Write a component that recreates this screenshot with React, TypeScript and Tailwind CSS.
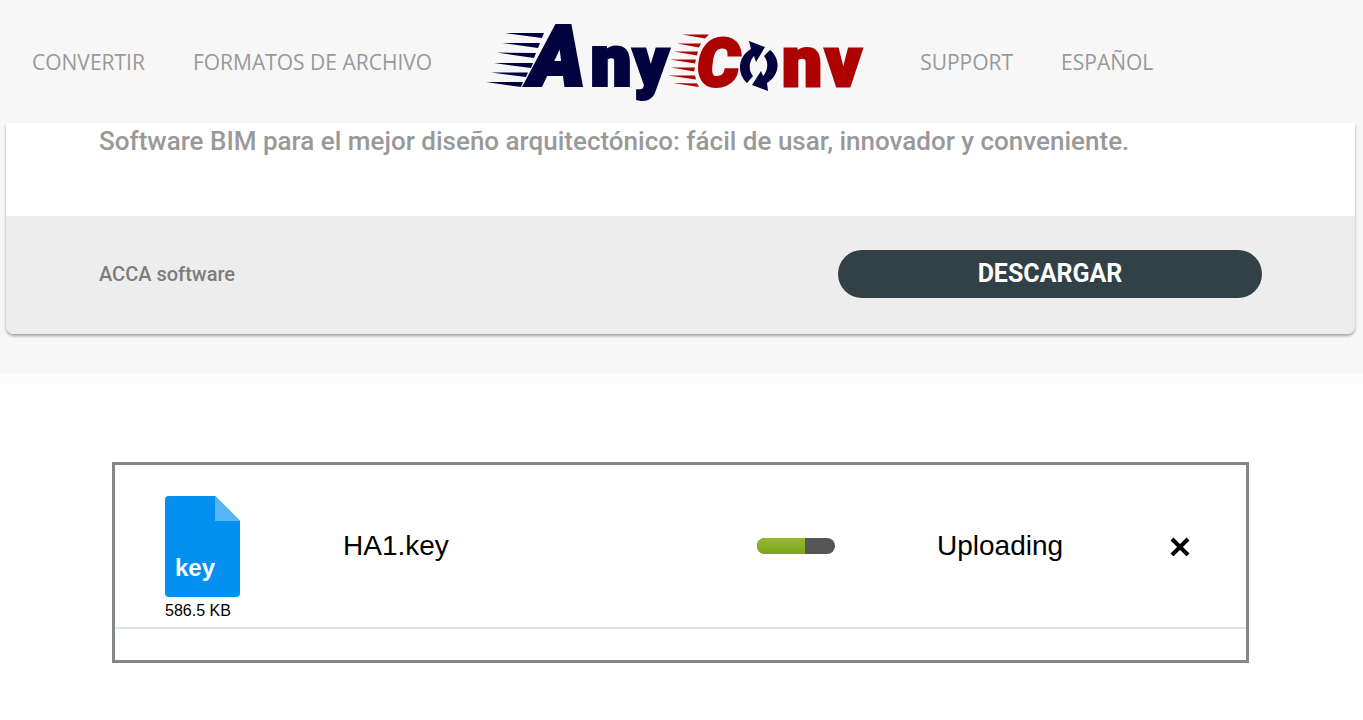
import { useState } from "react";

const leftLinks = ["CONVERTIR", "FORMATOS DE ARCHIVO"];
const rightLinks = ["SUPPORT", "ESPAÑOL"];

const Logo = () => (
  <svg width="380" height="123" viewBox="485 0 380 123" role="img" aria-label="AnyConv">
    {/* speed lines */}
    <g fill="#02023f">
      <path d="M504 33 L543 33 L541 38 Z" />
      <path d="M501 43 L539 43 L537 48 Z" />
      <path d="M496 52.5 L535 53 L533 58 Z" />
      <path d="M493 63 L532 63 L530 68 Z" />
      <path d="M490 72.5 L527 72.5 L525 77 Z" />
      <path d="M485 82 L522 82 L520 87 Z" />
    </g>
    <g fill="#ad0202">
      <path d="M681 34.5 L708 34.5 L704 38.5 Z" />
      <path d="M676 43.5 L700 43.5 L698 47.5 Z" />
      <path d="M673 51.5 L697 51.5 L696 55.5 Z" />
      <path d="M669 59.5 L695 59.5 L694 63.5 Z" />
      <path d="M670 67.5 L694 67.5 L693 71.5 Z" />
      <path d="M667 75.5 L694 75.5 L695 79.5 Z" />
      <path d="M672 83 L696 83.5 L698 87 Z" />
    </g>
    <g fontFamily="Roboto, 'Open Sans', sans-serif" fontWeight="900">
      <g fill="#02023f" stroke="#02023f" strokeWidth="3">
        <text x="529" y="85" fontSize="83" fontStyle="italic" strokeWidth="4">A</text>
        <text x="590" y="85" fontSize="71" strokeWidth="4">n</text>
        <text x="632" y="85" fontSize="69">y</text>
      </g>
      <g fill="#ad0202" stroke="#ad0202" strokeWidth="3">
        <text x="696" y="86" fontSize="67" fontStyle="italic">C</text>
        <text x="781" y="86" fontSize="71">n</text>
        <text x="824" y="86" fontSize="71">v</text>
      </g>
    </g>
    {/* circular arrows standing in for the "o" */}
    <g fill="#02023f">
      <path d="M748 41 L764 47 L755 62 L753 56 C748 61 747 71 752 76 L746 83 C736 74 736 57 750 49 Z" />
      <path d="M767 91 L751 85 L760 71 L762 76 C767 71 768 62 763 56 L769 50 C780 59 779 75 766 83 Z" />
    </g>
  </svg>
);

const NavLink = ({ label }: { label: string }) => (
  <a href="#" className="text-[21px] leading-8 text-[#999] hover:text-gray-700">
    {label}
  </a>
);

const Header = () => (
  <header className="flex h-[123px] items-center bg-[#f7f7f7] px-8 font-['Open_Sans',sans-serif]">
    <nav className="flex items-center gap-12">
      {leftLinks.map((label) => (
        <NavLink key={label} label={label} />
      ))}
    </nav>
    <a href="#" className="mx-[54px] shrink-0">
      <Logo />
    </a>
    <nav className="flex items-center gap-12">
      {rightLinks.map((label) => (
        <NavLink key={label} label={label} />
      ))}
    </nav>
  </header>
);

const AdCard = () => (
  <section className="bg-[#f7f7f7] pr-2 pb-[39px] pl-1.5 font-[Roboto,sans-serif]">
    <div className="overflow-hidden rounded-b-lg bg-white shadow-[0_2px_3px_rgba(0,0,0,0.35)]">
      <p className="px-[93px] pt-0.5 pb-[59px] text-[26px] leading-8 font-medium text-[#999]">
        Software BIM para el mejor diseño arquitectónico: fácil de usar, innovador y conveniente.
      </p>
      <div className="flex items-center justify-between bg-[#ededed] px-[93px] pt-[34px] pb-9">
        <span className="text-xl font-medium text-[#7c7c7c]">ACCA software</span>
        <button
          type="button"
          className="h-12 w-[424px] rounded-full bg-[#324047] text-[25px] leading-8 font-bold text-white"
        >
          DESCARGAR
        </button>
      </div>
    </div>
  </section>
);

const FileIcon = () => (
  <svg width="75" height="101" viewBox="0 0 75 101" role="img" aria-label="key file">
    <path d="M4 0 H50 L75 25 V97 Q75 101 71 101 H4 Q0 101 0 97 V4 Q0 0 4 0 Z" fill="#0390f1" />
    <path d="M50 0 L75 25 H50 Z" fill="#57b5f7" />
    <text x="10" y="80" fill="#fff" fontSize="24" fontWeight="700" fontFamily="'Liberation Sans', sans-serif">
      key
    </text>
  </svg>
);

const App = () => {
  const [files, setFiles] = useState([
    { name: "HA1.key", size: "586.5 KB", progress: 62, status: "Uploading" },
  ]);

  const removeFile = (name: string) => {
    setFiles(files.filter((file) => file.name !== name));
  };

  return (
    <div className="min-h-screen bg-white">
      <Header />
      <AdCard />
      <div className="h-[11px] bg-[#fcfcfc]" />

      <main className="pt-[78px] pr-[114px] pb-14 pl-28 font-['Liberation_Sans',Arial,sans-serif] text-black">
        <div className="border-3 border-[#868686] pb-[31px]">
          <table className="w-full table-fixed text-left text-[28px] leading-8">
            <tbody>
              {files.map((file) => (
                <tr key={file.name} className="border-b-2 border-[#dde5ec]">
                  <td className="w-[228px] pt-[31px] pb-1.5 pl-[50px]">
                    <FileIcon />
                    <div className="mt-1 text-base leading-5">{file.size}</div>
                  </td>
                  <td>{file.name}</td>
                  <td className="w-[180px]">
                    <div
                      role="progressbar"
                      aria-label="Upload progress"
                      aria-valuenow={file.progress}
                      className="h-4 w-[78px] overflow-hidden rounded-full bg-[#555]"
                    >
                      <div
                        className="h-full bg-linear-to-b from-[#94bb2f] to-[#7da41b]"
                        style={{ width: `${file.progress}%` }}
                      />
                    </div>
                  </td>
                  <td className="w-[233px]">{file.status}</td>
                  <td className="w-[76px]">
                    <button
                      type="button"
                      aria-label="Remove file"
                      className="block cursor-pointer"
                      onClick={() => removeFile(file.name)}
                    >
                      <svg width="20" height="20" viewBox="0 0 20 20" stroke="#000" strokeWidth="4">
                        <path d="M2 3 L18 19 M18 3 L2 19" />
                      </svg>
                    </button>
                  </td>
                </tr>
              ))}
            </tbody>
          </table>
        </div>
      </main>
    </div>
  );
};

export default App;
